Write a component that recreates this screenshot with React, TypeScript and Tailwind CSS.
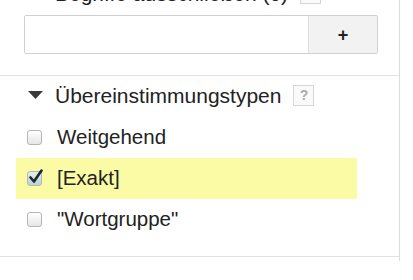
import React from 'react';

const HelpBox: React.FC = () => (
  <span className="ml-3 flex h-[21px] w-[21px] items-center justify-center border border-[#d6d6d6] bg-[#fafafa] text-[14px] font-bold leading-none text-[#aaaaaa]">
    ?
  </span>
);

const Caret: React.FC = () => (
  <svg width="15" height="8" viewBox="0 0 15 8" className="shrink-0">
    <path d="M0 0 H15 L7.5 8 Z" fill="#3a3a3a" />
  </svg>
);

const CheckBox: React.FC<{ checked?: boolean }> = ({ checked }) => (
  <span
    className={
      'relative block h-[15px] w-[15px] shrink-0 rounded-[3px] border border-[#b5b5b5] ' +
      (checked ? 'bg-gradient-to-b from-[#e4f0ec] to-[#b9d4cc]' : 'bg-gradient-to-b from-white to-[#e6e6e6]')
    }
  >
    {checked && (
      <svg width="16" height="16" viewBox="0 0 16 16" className="absolute left-[0px] top-[-3px]">
        <path d="M2.5 8.5 L6 12.5 L13.5 1.5" stroke="#1d2733" strokeWidth="2.6" fill="none" strokeLinecap="round" strokeLinejoin="round" />
      </svg>
    )}
  </span>
);

const rows = [
  { label: 'Weitgehend', checked: false },
  { label: '[Exakt]', checked: true },
  { label: '"Wortgruppe"', checked: false },
];

const App: React.FC = () => {
  return (
    <div className="h-[280px] w-[413px] overflow-hidden bg-white font-['Helvetica','Liberation_Sans',Arial,sans-serif] text-[#222222]">
      <div className="h-full w-[400px] border-r border-[#dcdcdc]">
        <section className="-mt-[19px] pb-[21px]">
          <div className="flex h-[24px] items-center pl-[28px]">
            <Caret />
            <span className="ml-3 text-[21px] leading-none">Begriffe ausschließen (0)</span>
            <HelpBox />
          </div>
          <div className="ml-6 mt-[10px] flex h-[39px] w-[354px] overflow-hidden rounded-[2px] border border-[#d0d0d0]">
            <input className="h-full flex-1 bg-white px-2 outline-none" />
            <button className="flex h-full w-[69px] items-center justify-center border-l border-[#dedede] bg-[#f2f2f2] text-[18px] font-bold leading-none text-[#222222]">
              +
            </button>
          </div>
        </section>

        <section className="border-t border-[#e2e2e2] pb-[16px] pt-[7px]">
          <div className="flex h-[24px] items-center pl-[28px]">
            <Caret />
            <span className="ml-3 text-[21px] leading-none">Übereinstimmungstypen</span>
            <HelpBox />
          </div>
          <div className="mt-[10px] flex w-[341px] flex-col ml-4">
            {rows.map(r => (
              <div
                key={r.label}
                className={'flex h-[41px] items-center pl-[11px] ' + (r.checked ? 'bg-[#fbfba6]' : '')}
              >
                <CheckBox checked={r.checked} />
                <span className="ml-[15px] text-[20.5px] leading-none">{r.label}</span>
              </div>
            ))}
          </div>
        </section>
        <div className="border-t border-[#e2e2e2]" />
      </div>
    </div>
  );
};

export default App;
